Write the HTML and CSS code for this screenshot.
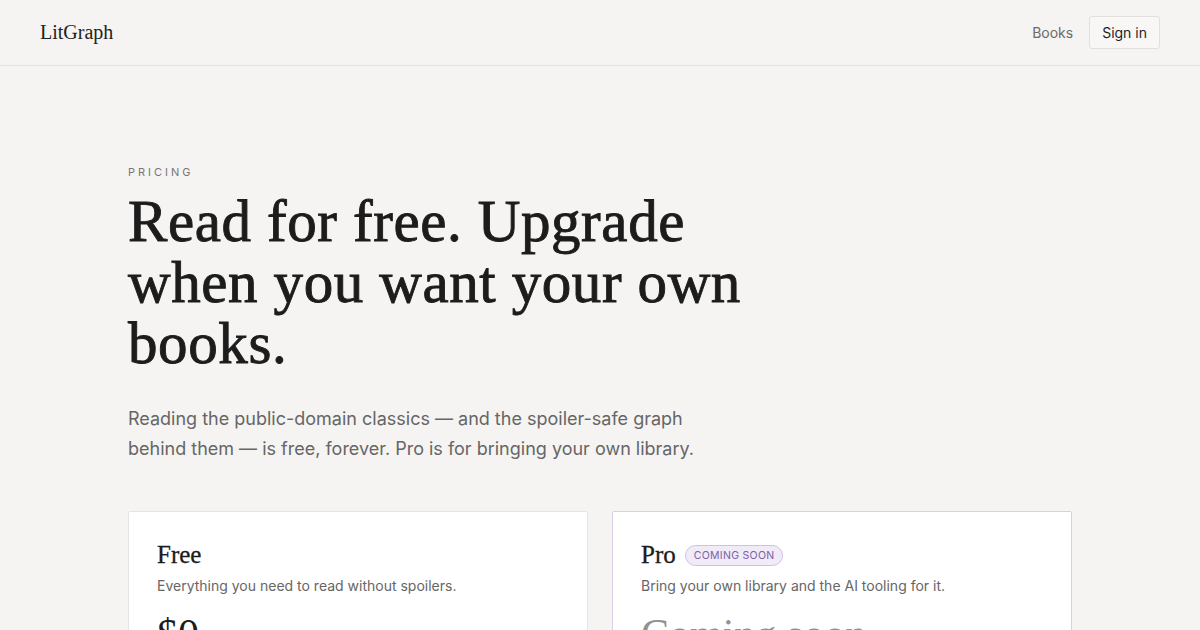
FILE: index.html
```html
<!DOCTYPE html>
<html lang="en">
<head>
    <meta charset="UTF-8">
    <meta name="viewport" content="width=device-width, initial-scale=1.0">
    <title>Pricing · LitGraph</title>
    <link rel="stylesheet" href="styles.css">
</head>
<body>

<header class="topbar">
    <a class="logo" href="#">LitGraph</a>
    <nav class="nav">
        <a class="nav-link" href="#">Books</a>
        <a class="btn-signin" href="#">Sign in</a>
    </nav>
</header>

<main class="page">
    <p class="eyebrow">Pricing</p>
    <h1 class="headline">Read for free. Upgrade when you want your own books.</h1>
    <p class="lead">Reading the public-domain classics — and the spoiler-safe graph behind them — is free, forever. Pro is for bringing your own library.</p>

    <div class="plans">
        <div class="plan">
            <h2 class="plan-name">Free</h2>
            <p class="plan-desc">Everything you need to read without spoilers.</p>
            <div class="plan-price">$0</div>
        </div>
        <div class="plan plan-pro">
            <h2 class="plan-name">Pro <span class="badge">Coming soon</span></h2>
            <p class="plan-desc">Bring your own library and the AI tooling for it.</p>
            <div class="plan-price muted">Coming soon</div>
        </div>
    </div>
</main>

</body>
</html>
```

FILE: styles.css
```css
body {
    font-family: Inter, "Noto Sans", sans-serif;
    background-color: #f5f4f2;
    color: #1c1c1c;
    margin: 0;
    padding: 0;
}
a {
    text-decoration: none;
    color: inherit;
}
.topbar {
    height: 66px;
    box-sizing: border-box;
    border-bottom: 1px solid #e4e2df;
    display: flex;
    align-items: center;
    justify-content: space-between;
    padding: 0 40px;
}
.logo {
    font-family: "Liberation Serif", serif;
    font-size: 20px;
    color: #222;
}
.nav {
    display: flex;
    align-items: center;
    gap: 16px;
}
.nav-link {
    font-size: 14px;
    color: #6b6b6b;
}
.btn-signin {
    font-size: 14px;
    color: #1f1f1f;
    padding: 7px 12px;
    border: 1px solid #e2e0dc;
    border-radius: 3px;
    background-color: #f8f7f5;
}
.page {
    max-width: 944px;
    margin: 0 auto;
    padding-top: 99px;
}
.eyebrow {
    margin: 0;
    font-size: 11px;
    letter-spacing: 3px;
    text-transform: uppercase;
    color: #777;
}
.headline {
    font-family: "Liberation Serif", serif;
    font-weight: 400;
    font-size: 59px;
    line-height: 61px;
    letter-spacing: 0.6px;
    -webkit-text-stroke: 0.9px #1c1c1c;
    color: #1c1c1c;
    max-width: 660px;
    margin: 12px 0 0;
}
.lead {
    font-size: 18px;
    line-height: 30px;
    color: #666;
    max-width: 580px;
    margin: 30px 0 0;
}
.plans {
    display: grid;
    grid-template-columns: 1fr 1fr;
    gap: 24px;
    margin-top: 47px;
}
.plan {
    background-color: #fff;
    border: 1px solid #e6e4e0;
    border-radius: 2px;
    padding: 28px 28px 40px;
}
.plan-pro {
    border-color: #d6cfe6;
}
.plan-name {
    font-family: "Liberation Serif", serif;
    font-weight: 400;
    font-size: 25px;
    line-height: 30px;
    -webkit-text-stroke: 0.3px #1c1c1c;
    margin: 0;
    display: flex;
    align-items: center;
    gap: 9px;
}
.badge {
    font-family: Inter, sans-serif;
    font-size: 10.5px;
    font-weight: 400;
    letter-spacing: 0.3px;
    text-transform: uppercase;
    -webkit-text-stroke: 0;
    color: #7a62a8;
    background-color: #f0ebf7;
    border: 1px solid #cdc2e2;
    border-radius: 999px;
    padding: 3px 8px;
    line-height: 13px;
}
.plan-desc {
    font-size: 14px;
    color: #666;
    margin: 7px 0 0;
}
.plan-price {
    font-family: "Liberation Serif", serif;
    font-size: 42px;
    line-height: 48px;
    margin-top: 16px;
}
.plan-price.muted {
    color: #919191;
}
```
